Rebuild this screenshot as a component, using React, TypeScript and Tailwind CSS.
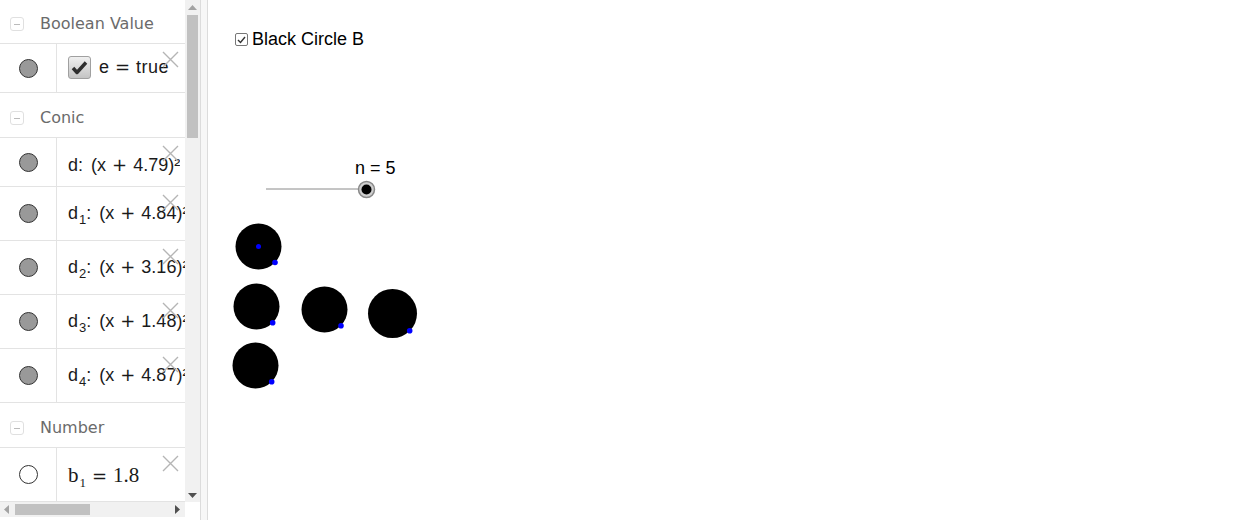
import React from "react";

type Row =
  | { kind: "header"; label: string; h: string }
  | { kind: "item"; h: string; pt: string; filled: boolean; content: React.ReactNode };

const sans = { fontFamily: '"DejaVu Sans", sans-serif' };
const arial = { fontFamily: '"Liberation Sans", Arial, sans-serif' };

function Sub({ n }: { n: string }) {
  return <span className="text-[13px] relative top-[5px] ml-[1px]">{n}</span>;
}

function Op({ s }: { s: string }) {
  return (
    <span className="text-[18px] mx-[6px]" style={sans}>
      {s}
    </span>
  );
}

function Conic({ i, v }: { i?: string; v: string }) {
  return (
    <span className="whitespace-nowrap">
      d{i && <Sub n={i} />}:<span className="ml-[8px]">(x</span>
      <Op s="+" />
      {v})²
    </span>
  );
}

const rows: Row[] = [
  { kind: "header", label: "Boolean Value", h: "h-[44px] pt-[5px]" },
  {
    kind: "item",
    h: "h-[49px]",
    pt: "pt-[10px]",
    filled: true,
    content: (
      <span className="flex items-center whitespace-nowrap">
        <span className="w-[23px] h-[23px] mr-[8px] rounded-[3px] border border-[#a0a0a0] bg-gradient-to-b from-[#f0f0f0] to-[#c4c4c4] flex items-center justify-center">
          <svg width="17" height="15" viewBox="0 0 17 15">
            <path d="M2 8 L6 12.5 L15 2.5" fill="none" stroke="#2e2e2e" strokeWidth="3.4" strokeLinejoin="round" />
          </svg>
        </span>
        <span>
          e<Op s="=" />
          <span className="tracking-[0.5px]">true</span>
        </span>
      </span>
    ),
  },
  { kind: "header", label: "Conic", h: "h-[45px] pt-[6px]" },
  { kind: "item", h: "h-[49px]", pt: "pt-[14px]", filled: true, content: <Conic v="4.79" /> },
  { kind: "item", h: "h-[54px]", pt: "pt-[13px]", filled: true, content: <Conic i="1" v="4.84" /> },
  { kind: "item", h: "h-[54px]", pt: "pt-[13px]", filled: true, content: <Conic i="2" v="3.16" /> },
  { kind: "item", h: "h-[54px]", pt: "pt-[13px]", filled: true, content: <Conic i="3" v="1.48" /> },
  { kind: "item", h: "h-[54px]", pt: "pt-[13px]", filled: true, content: <Conic i="4" v="4.87" /> },
  { kind: "header", label: "Number", h: "h-[45px] pt-[6px]" },
  {
    kind: "item",
    h: "h-[54px]",
    pt: "pt-[14px]",
    filled: false,
    content: (
      <span className="whitespace-nowrap text-[21px]" style={{ fontFamily: '"Liberation Serif", serif' }}>
        b<Sub n="1" />
        <Op s="=" />
        1.8
      </span>
    ),
  },
];

function CloseX() {
  return (
    <svg className="absolute right-[6px] top-[7px]" width="17" height="17" viewBox="0 0 17 17">
      <path d="M1 1 L16 16 M16 1 L1 16" stroke="#b5b5b5" strokeWidth="1.4" />
    </svg>
  );
}

const circles = [
  { cx: 258.5, cy: 246.5, r: 23, px: 275, py: 262.5, center: true },
  { cx: 256.5, cy: 306.5, r: 23, px: 272.7, py: 322.7 },
  { cx: 324.5, cy: 309.5, r: 23, px: 341, py: 325.7 },
  { cx: 392.5, cy: 313.5, r: 24.5, px: 409.7, py: 330.7 },
  { cx: 255.5, cy: 365.5, r: 23, px: 271.7, py: 381.7 },
];

export default function App() {
  return (
    <div className="w-[1243px] h-[520px] flex bg-white overflow-hidden" style={sans}>
      {/* Algebra view */}
      <div className="w-[200px] h-[517px] flex flex-col shrink-0">
        <div className="flex h-[502px]">
          <div className="w-[185px] overflow-hidden">
            {rows.map((row, i) =>
              row.kind === "header" ? (
                <div key={i} className={`${row.h} flex items-center border-b border-[#e3e3e3] text-[16px] text-[#6b6b6b]`}>
                  <span className="ml-[10px] mr-[16px] w-[14px] h-[14px] rounded-[3px] border border-[#e0e0e0] flex items-center justify-center">
                    <span className="w-[6px] h-px bg-[#bbb]" />
                  </span>
                  {row.label}
                </div>
              ) : (
                <div key={i} className={`${row.h} relative flex border-b border-[#e3e3e3] text-[18px] text-[#1a1a1a]`} style={arial}>
                  <div className="w-[57px] shrink-0 border-r border-[#e3e3e3] flex items-center justify-center">
                    <span
                      className={`w-[19px] h-[19px] rounded-full border border-[#333] ${row.filled ? "bg-[#999]" : "bg-white"}`}
                    />
                  </div>
                  <div className={`flex items-start ${row.pt} pl-[11px] overflow-hidden leading-[26px]`}>{row.content}</div>
                  <CloseX />
                </div>
              )
            )}
          </div>
          {/* vertical scrollbar */}
          <div className="w-[15px] bg-[#f1f1f1] flex flex-col items-center">
            <svg width="9" height="5" viewBox="0 0 9 5" className="mt-[5px] mb-[5px]">
              <path d="M0 5 L4.5 0 L9 5 Z" fill="#a3a3a3" />
            </svg>
            <div className="w-[11px] h-[123px] bg-[#c1c1c1]" />
            <div className="flex-1" />
            <svg width="9" height="5" viewBox="0 0 9 5" className="mb-[4px]">
              <path d="M0 0 L4.5 5 L9 0 Z" fill="#505050" />
            </svg>
          </div>
        </div>
        {/* horizontal scrollbar */}
        <div className="h-[15px] w-[185px] bg-[#f1f1f1] flex items-center">
          <svg width="5" height="9" viewBox="0 0 5 9" className="ml-[4px] mr-[6px]">
            <path d="M5 0 L0 4.5 L5 9 Z" fill="#a3a3a3" />
          </svg>
          <div className="w-[75px] h-[11px] bg-[#c1c1c1]" />
          <div className="flex-1" />
          <svg width="5" height="9" viewBox="0 0 5 9" className="mr-[5px]">
            <path d="M0 0 L5 4.5 L0 9 Z" fill="#505050" />
          </svg>
        </div>
      </div>

      {/* divider */}
      <div className="w-[8px] h-full border-l border-r border-[#dcdcdc] bg-[#f7f7f7] shrink-0" />

      {/* Graphics view */}
      <div className="relative flex-1 h-full">
        <label className="absolute left-[27px] top-[26px] flex items-center gap-[4px] text-[18px] text-black" style={arial}>
          <span className="w-[13px] h-[13px] rounded-[2px] border border-[#777] flex items-center justify-center">
            <svg width="9" height="8" viewBox="0 0 9 8">
              <path d="M1 4 L3.5 6.5 L8 1" fill="none" stroke="#333" strokeWidth="1.4" />
            </svg>
          </span>
          Black Circle B
        </label>
        <span className="absolute left-[147px] top-[155px] text-[18px] text-black" style={arial}>
          n = 5
        </span>
        <svg className="absolute left-[-208px] top-0" width="1243" height="520">
          <line x1="266" y1="189" x2="366" y2="189" stroke="#8a8a8a" strokeWidth="1" />
          <circle cx="366.5" cy="189.5" r="8" fill="#cfcfcf" stroke="#888" strokeWidth="1.5" />
          <circle cx="366.5" cy="189.5" r="5" fill="#000" />
          {circles.map((c, i) => (
            <g key={i}>
              <circle cx={c.cx} cy={c.cy} r={c.r} fill="#000" />
              {c.center && <circle cx={c.cx} cy={c.cy} r="2.5" fill="#0000ff" />}
              <circle cx={c.px} cy={c.py} r="2.8" fill="#0000ff" />
            </g>
          ))}
        </svg>
      </div>
    </div>
  );
}
